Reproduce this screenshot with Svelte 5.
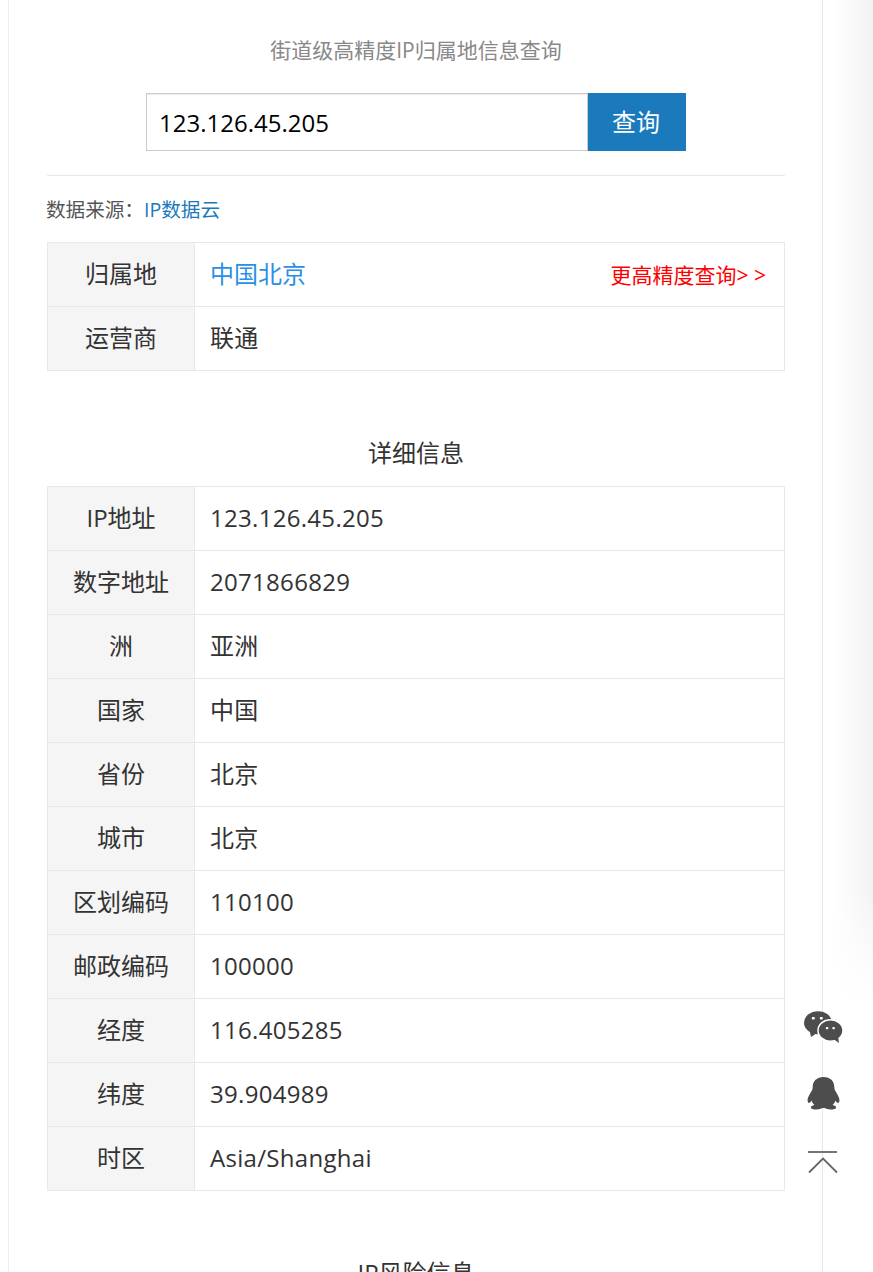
<script>
  const details = [
    ['IP地址', '123.126.45.205'],
    ['数字地址', '2071866829'],
    ['洲', '亚洲'],
    ['国家', '中国'],
    ['省份', '北京'],
    ['城市', '北京'],
    ['区划编码', '110100'],
    ['邮政编码', '100000'],
    ['经度', '116.405285'],
    ['纬度', '39.904989'],
    ['时区', 'Asia/Shanghai']
  ];
</script>

<div class="page">
  <main class="panel">
    <h2 class="subtitle">街道级高精度IP归属地信息查询</h2>

    <form class="search" onsubmit={(e) => e.preventDefault()}>
      <input class="search-input" type="text" value="123.126.45.205" />
      <button class="search-btn" type="submit">查询</button>
    </form>

    <p class="source">数据来源：<a href="#ipdata">IP数据云</a></p>

    <table class="info">
      <tbody>
        <tr>
          <th>归属地</th>
          <td class="location">
            <span class="place">中国北京</span>
            <a class="more" href="#more">更高精度查询&gt; &gt;</a>
          </td>
        </tr>
        <tr>
          <th>运营商</th>
          <td>联通</td>
        </tr>
      </tbody>
    </table>

    <h3 class="section-title">详细信息</h3>

    <table class="info">
      <tbody>
        {#each details as [label, value]}
          <tr>
            <th>{label}</th>
            <td>{value}</td>
          </tr>
        {/each}
      </tbody>
    </table>

    <h3 class="section-title">IP风险信息</h3>
  </main>

  <div class="shade"></div>

  <aside class="tools">
    <svg class="tool" width="40" height="34" viewBox="0 0 40 34" aria-label="微信">
      <ellipse cx="15" cy="12.7" rx="14" ry="11.5" fill="#4d4d4d"/>
      <path d="M6.500 20l1.500 7 6-4z" fill="#4d4d4d"/>
      <rect x="8.800" y="7" width="3" height="2.400" rx="1" fill="#fff"/>
      <rect x="16.800" y="7" width="3" height="2.400" rx="1" fill="#fff"/>
      <ellipse cx="27.500" cy="20.500" rx="12.500" ry="10.700" fill="#4d4d4d" stroke="#fff" stroke-width="1.500"/>
      <path d="M30.500 29l5.500 4-1-7z" fill="#4d4d4d"/>
      <rect x="22.800" y="17" width="2.600" height="2.200" rx="1" fill="#fff"/>
      <rect x="29.300" y="17" width="2.600" height="2.200" rx="1" fill="#fff"/>
    </svg>

    <svg class="tool" width="35" height="34" viewBox="0 0 34 36" preserveAspectRatio="none" aria-label="QQ">
      <path d="M17 1c-6.500 0-10.500 4.600-10.500 10.500 0 1-.1 2.300-.5 3.200C4.200 18.300 1.500 22.300 1.500 25.500c0 2 .6 3 1.200 3 .9 0 2-1.300 2.800-2.600.4 1.900 1.400 3.500 2.700 4.700-2.200.6-3.500 1.600-3.500 2.700 0 1.400 2.500 2.200 5.500 2.200 2.500 0 4.600-.6 5.600-1.500h2.400c1 .9 3.100 1.500 5.600 1.500 3 0 5.500-.8 5.500-2.200 0-1.100-1.300-2.100-3.500-2.700 1.300-1.200 2.300-2.800 2.700-4.700.8 1.300 1.900 2.600 2.800 2.600.6 0 1.200-1 1.200-3 0-3.200-2.700-7.200-4.500-10.800-.4-.9-.5-2.200-.5-3.200C27.500 5.600 23.500 1 17 1z" fill="#4d4d4d"/>
    </svg>

    <svg class="tool back-top" width="30" height="24" viewBox="0 0 30 24" aria-label="返回顶部">
      <path d="M0 1h29" stroke="#666" stroke-width="1.800" fill="none"/>
      <path d="M1 21.500L15 7.500 29 21.500" stroke="#666" stroke-width="1.800" fill="none"/>
    </svg>
  </aside>
</div>

<style>
  :global(body) {
    margin: 0;
    background: #fff;
    font-family: "Open Sans", "Noto Sans CJK SC", sans-serif;
    color: #333;
  }

  .page {
    position: relative;
    height: 1272px;
    overflow: hidden;
  }

  .panel {
    box-sizing: border-box;
    width: 815px;
    height: 1272px;
    margin-left: 8px;
    padding: 0 37px 0 38px;
    border-left: 1px solid #eee;
    border-right: 1px solid #e6e6e6;
    overflow: hidden;
  }

  .subtitle {
    margin: 0;
    padding-top: 35px;
    font-size: 21px;
    line-height: 30px;
    font-weight: 400;
    color: #888;
    text-align: center;
  }

  .search {
    display: flex;
    justify-content: center;
    height: 58px;
    margin-top: 28px;
    padding-bottom: 24px;
    border-bottom: 1px solid #e8e8e8;
  }

  .search-input {
    box-sizing: border-box;
    width: 442px;
    height: 58px;
    padding: 0 12px;
    border: 1px solid #ccc;
    border-radius: 0;
    outline: none;
    font: 24px "Open Sans", "Noto Sans CJK SC", sans-serif;
    color: #000;
    box-shadow: inset 0 1px 1px rgba(0, 0, 0, 0.075);
  }

  .search-btn {
    width: 98px;
    height: 58px;
    border: none;
    padding: 0 2px 3px 0;
    background: #1a7abc;
    color: #fff;
    font: 24px "Open Sans", "Noto Sans CJK SC", sans-serif;
  }

  .source {
    margin: 19px 0 0 -1px;
    font-size: 19.6px;
    line-height: 30px;
    color: #555;
  }

  .source a {
    color: #1a7abc;
    text-decoration: none;
  }

  .info {
    width: 738px;
    margin-top: 17px;
    border-collapse: collapse;
    table-layout: fixed;
    font-size: 24px;
  }

  .info th,
  .info td {
    height: 61px;
    padding: 0 0 2px;
    border: 1px solid #e8e8e8;
    font-weight: 400;
    line-height: 34px;
    color: #333;
  }

  .info th {
    width: 146px;
    background: #f5f5f5;
    text-align: center;
  }

  .info td {
    padding-left: 15px;
    letter-spacing: 0.3px;
  }

  .location {
    position: relative;
  }

  .info .place {
    font-size: 24px;
    letter-spacing: 0;
    color: #2a8fe6;
  }

  .more {
    position: absolute;
    right: 18px;
    top: 17px;
    font-size: 21px;
    line-height: 30px;
    letter-spacing: 0;
    color: #f00;
    text-decoration: none;
  }

  .section-title {
    margin: 0;
    padding-top: 65px;
    font-size: 24px;
    font-weight: 400;
    line-height: 34px;
    color: #333;
    text-align: center;
  }

  .section-title + .info {
    margin-top: 16px;
  }

  .shade {
    position: absolute;
    right: 0;
    top: 0;
    width: 40px;
    height: 1000px;
    background: linear-gradient(to right, rgba(240, 240, 240, 0), #f2f2f2);
    -webkit-mask-image: linear-gradient(to bottom, #000 88%, transparent);
    mask-image: linear-gradient(to bottom, #000 88%, transparent);
    pointer-events: none;
  }

  .tools {
    position: absolute;
    left: 803px;
    top: 1010px;
    width: 40px;
    display: flex;
    flex-direction: column;
    align-items: center;
    gap: 32px;
  }

  .tool {
    display: block;
    flex: none;
  }

  .back-top {
    margin-top: 9px;
  }
</style>
